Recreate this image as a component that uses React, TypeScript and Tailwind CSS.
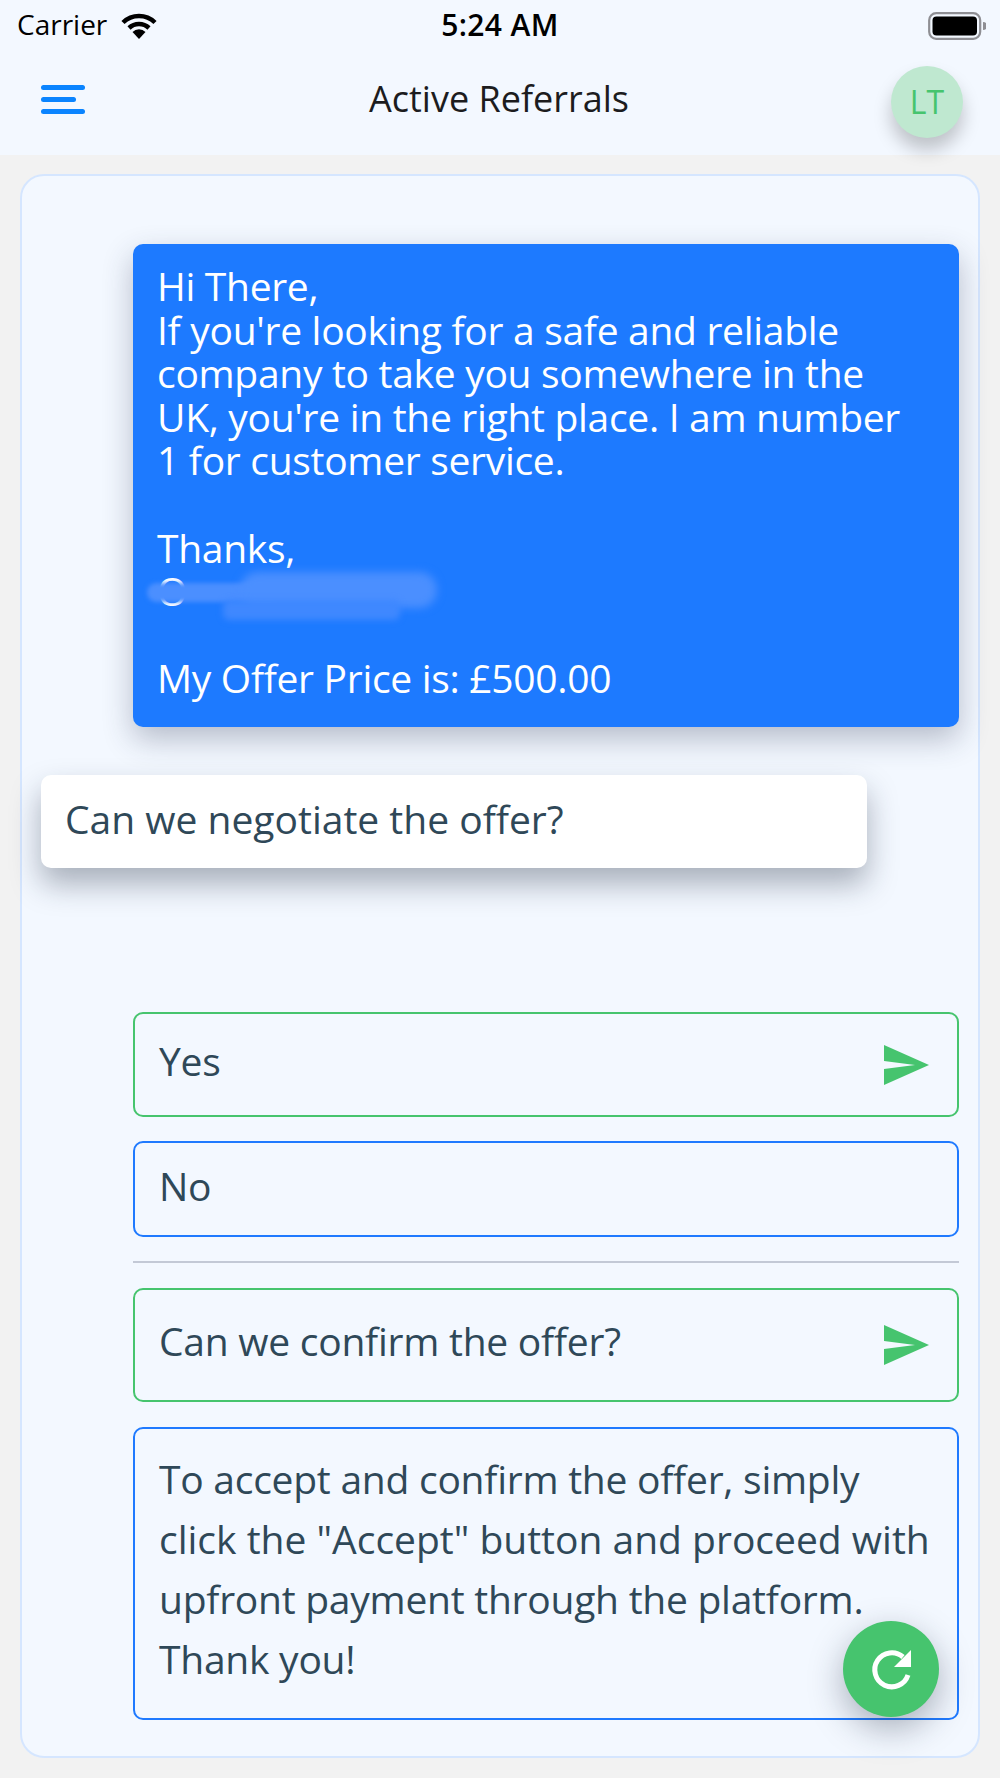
const FONT = "font-['Open_Sans','Noto_Sans',sans-serif]";

function SendIcon() {
  return (
    <svg width="45" height="40" viewBox="0 0 45 40" className="shrink-0">
      <path d="M0 0 L45 20 L0 40 L0 24 L31 20 L0 16 Z" fill="#46c46e" />
    </svg>
  );
}

function Wifi() {
  return (
    <svg width="36" height="26" viewBox="0 0 36 26">
      <path d="M2 9.5 A23 23 0 0 1 34 9.5" fill="none" stroke="#000" strokeWidth="4.5" />
      <path d="M8 15 A14.5 14.5 0 0 1 28 15" fill="none" stroke="#000" strokeWidth="4.5" />
      <path d="M11.5 19 A9 9 0 0 1 24.5 19 L18 26 Z" fill="#000" />
    </svg>
  );
}

function Battery() {
  return (
    <svg width="58" height="28" viewBox="0 0 58 28">
      <rect x="1.2" y="1.2" width="51" height="25.6" rx="7" fill="none" stroke="#8e8e93" strokeWidth="2.2" />
      <rect x="4.5" y="4.5" width="44.5" height="19" rx="4" fill="#000" />
      <path d="M55 10 A4 4 0 0 1 55 18 Z" fill="#8e8e93" />
    </svg>
  );
}

export default function App() {
  return (
    <div className={`${FONT} h-[1778px] w-[1000px] overflow-hidden bg-[#f2f2f2] flex flex-col`}>
      <div className="h-[155px] shrink-0 bg-[#f3f8ff] flex flex-col">
        <div className="h-[52px] px-[17px] relative flex items-center justify-between">
          <div className="flex items-center gap-[14px]">
            <span className="-mt-[4px] text-[28px] leading-[36px] text-black">Carrier</span>
            <Wifi />
          </div>
          <span className="-mt-[2px] text-[30px] leading-[36px] font-semibold tracking-[0.4px] text-black absolute left-[420px] w-[160px] text-center">5:24 AM</span>
          <div className="-mr-[3px]"><Battery /></div>
        </div>
        <div className="flex-1 pl-[41px] pr-[37px] flex items-center justify-between pb-[9px]">
          <div className="flex flex-col gap-[7px] w-[66px]">
            <div className="h-[5px] w-[44px] rounded-full bg-[#0a84ff]" />
            <div className="h-[5px] w-[35px] rounded-full bg-[#0a84ff]" />
            <div className="h-[5px] w-[44px] rounded-full bg-[#0a84ff]" />
          </div>
          <span className="text-[36px] text-[#1c1c1e]">Active Referrals</span>
          <div className="relative z-10 mt-[6px] w-[72px] h-[72px] rounded-full bg-[#bfe8d0] flex items-center justify-center text-[32px] text-[#46c46e] shadow-[0_12px_18px_rgba(0,0,0,0.22)]">
            LT
          </div>
        </div>
      </div>

      <div className="relative mx-[20px] mt-[19px] h-[1584px] rounded-[24px] border-2 border-[#d5e6ff] bg-[#f3f8ff] pl-[19px] pr-[19px] pt-[68px]">
        <div className="relative ml-[92px] h-[483px] rounded-[10px] bg-[#1d7aff] pl-[24px] pr-[20px] pt-[20px] text-[39px] leading-[43.6px] tracking-[-0.3px] whitespace-nowrap text-white shadow-[0_12px_30px_rgba(40,50,80,0.3)]">
          <p>Hi There,</p>
          <p>
            If you're looking for a safe and reliable<br />
            company to take you somewhere in the<br />
            UK, you're in the right place. I am number<br />
            1 for customer service.
          </p>
          <p className="mt-[43.6px]">Thanks,</p>
          <p>O</p>
          <p className="mt-[43.6px]">My Offer Price is: £500.00</p>
          {/* smudge that hides the name in the reference */}
          <div className="absolute left-[14px] top-[339px] w-[130px] h-[19px] rounded-full bg-[#4b8fff] blur-[2px]" />
          <div className="absolute left-[107px] top-[328px] w-[197px] h-[36px] rounded-full bg-[#4b8fff] blur-[4px]" />
          <div className="absolute left-[90px] top-[356px] w-[177px] h-[20px] rounded-[6px] bg-[#3f88ff] blur-[3px]" />
        </div>

        <div className="mt-[48px] h-[93px] w-[826px] rounded-[10px] bg-white pl-[24px] pt-[22px] text-[39px] leading-[43.6px] text-[#2f4858] shadow-[0_16px_30px_rgba(30,40,60,0.35)]">
          Can we negotiate the offer?
        </div>

        <div className="ml-[92px] mt-[144px] flex flex-col text-[39px] tracking-[-0.25px] text-[#2f4858]">
          <div className="h-[105px] rounded-[10px] border-2 border-[#46c46e] pl-[24px] pr-[28px] flex items-center justify-between">
            <span className="-mt-[6px]">Yes</span>
            <SendIcon />
          </div>
          <div className="mt-[24px] h-[96px] rounded-[10px] border-2 border-[#1f7aff] pl-[24px] flex items-center">
            <span className="-mt-[6px]">No</span>
          </div>
          <div className="mt-[24px] h-[2px] bg-[#c3c9d6]" />
          <div className="mt-[25px] h-[114px] rounded-[10px] border-2 border-[#46c46e] pl-[24px] pr-[28px] flex items-center justify-between">
            <span className="-mt-[8px]">Can we confirm the offer?</span>
            <SendIcon />
          </div>
          <div className="mt-[25px] h-[293px] rounded-[10px] border-2 border-[#1f7aff] pl-[24px] pt-[20px] leading-[60px] whitespace-nowrap">
            To accept and confirm the offer, simply<br />
            <span className="tracking-[0px]">click the "Accept" button and proceed with</span><br />
            upfront payment through the platform.<br />
            Thank you!
          </div>
        </div>

        <button className="absolute left-[821px] top-[1445px] w-[96px] h-[96px] rounded-full bg-[#46c46e] shadow-[0_12px_34px_rgba(30,40,60,0.35)]">
          <svg width="96" height="96" viewBox="0 0 96 96">
            <path d="M60 36 A17 17 0 1 0 65 54" fill="none" stroke="#fff" strokeWidth="5" />
            <path d="M68 29 L68 46 L51 46 Z" fill="#fff" />
          </svg>
        </button>
      </div>
    </div>
  );
}
